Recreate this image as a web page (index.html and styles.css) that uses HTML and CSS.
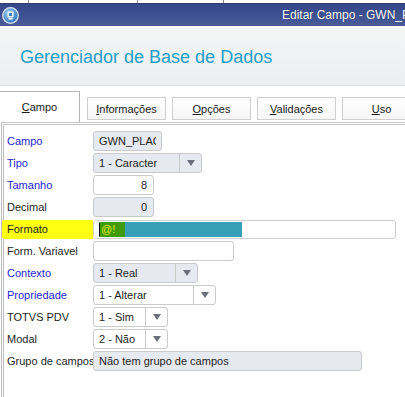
FILE: index.html
```html
<!DOCTYPE html>
<html lang="pt">
<head>
<meta charset="utf-8">
<title>Editar Campo</title>
<link rel="stylesheet" href="styles.css">
</head>
<body>
<div class="window">
  <div class="strip">
    <div class="strip-cell c1"></div>
    <div class="strip-cell c2"></div>
    <div class="strip-cell c3"></div>
  </div>
  <div class="titlebar">
    <svg class="app-icon" width="17" height="17" viewBox="0 0 17 17">
      <defs>
        <radialGradient id="ig" cx="0.4" cy="0.35" r="0.7">
          <stop offset="0" stop-color="#9fd2f2"/>
          <stop offset="1" stop-color="#2a6fb8"/>
        </radialGradient>
      </defs>
      <circle cx="8.5" cy="8.5" r="7.8" fill="url(#ig)" stroke="#d8e4f0" stroke-width="1.3"/>
      <rect x="5.5" y="4.5" width="6" height="6" rx="0.8" fill="#e8f3fb"/>
      <rect x="7" y="6" width="3" height="3" fill="#3d7fc0"/>
      <rect x="6.5" y="11" width="4" height="1.6" fill="#e8f3fb"/>
    </svg>
    <span class="title-text">Editar Campo - GWN_PLACA</span>
  </div>
  <div class="header">
    <h1 class="app-title">Gerenciador de Base de Dados</h1>
  </div>
  <div class="tabs">
    <div class="tab active"><span><u>C</u>ampo</span></div>
    <div class="tab"><span><u>I</u>nformações</span></div>
    <div class="tab"><span><u>O</u>pções</span></div>
    <div class="tab"><span><u>V</u>alidações</span></div>
    <div class="tab"><span><u>U</u>so</span></div>
  </div>
  <div class="panel">
    <div class="row">
      <label class="lbl blue">Campo</label>
      <div class="field ro w-campo"><span class="clip">GWN_PLACA</span></div>
    </div>
    <div class="row">
      <label class="lbl blue">Tipo</label>
      <div class="select ro w-tipo"><span class="val">1 - Caracter</span><span class="arr"><i class="tri"></i></span></div>
    </div>
    <div class="row">
      <label class="lbl blue">Tamanho</label>
      <div class="field num w-num">8</div>
    </div>
    <div class="row">
      <label class="lbl">Decimal</label>
      <div class="field ro num w-num">0</div>
    </div>
    <div class="row">
      <label class="lbl hl">Formato</label>
      <div class="field fmt w-fmt">
        <span class="fmt-fill"><span class="fmt-sel"><i class="caret"></i>@!</span></span>
      </div>
    </div>
    <div class="row">
      <label class="lbl">Form. Variavel</label>
      <div class="field w-var"></div>
    </div>
    <div class="row">
      <label class="lbl blue">Contexto</label>
      <div class="select ro w-ctx"><span class="val">1 - Real</span><span class="arr"><i class="tri"></i></span></div>
    </div>
    <div class="row">
      <label class="lbl blue">Propriedade</label>
      <div class="select w-prop"><span class="val">1 - Alterar</span><span class="arr"><i class="tri"></i></span></div>
    </div>
    <div class="row">
      <label class="lbl">TOTVS PDV</label>
      <div class="select w-sm"><span class="val">1 - Sim</span><span class="arr"><i class="tri"></i></span></div>
    </div>
    <div class="row">
      <label class="lbl">Modal</label>
      <div class="select w-sm"><span class="val">2 - Não</span><span class="arr"><i class="tri"></i></span></div>
    </div>
    <div class="row">
      <label class="lbl nowrap">Grupo de campos</label>
      <div class="field ro w-grp">Não tem grupo de campos</div>
    </div>
  </div>
</div>
</body>
</html>
```
FILE: styles.css
```css
* { box-sizing: border-box; }
html, body {
  margin: 0;
  padding: 0;
  width: 405px;
  height: 397px;
  overflow: hidden;
  background: #ffffff;
  font-family: "Liberation Sans", Arial, sans-serif;
  font-size: 11px;
  color: #1e1e1e;
}
.window {
  width: 405px;
  height: 397px;
  display: flex;
  flex-direction: column;
  overflow: hidden;
}
.strip {
  height: 3px;
  display: flex;
  background: #ffffff;
  flex: none;
}
.strip-cell { height: 3px; border-right: 1px solid #8a8a8a; }
.c1 { width: 29px; }
.c2 { width: 109px; }
.c3 { width: 86px; }

.titlebar {
  flex: none;
  height: 23px;
  display: flex;
  align-items: center;
  background: linear-gradient(#34488a, #4a5b98);
  border-top: 1px solid #2c3c70;
  overflow: hidden;
  white-space: nowrap;
}
.app-icon { flex: none; margin-left: 2px; margin-top: 1px; }
.title-text {
  flex: none;
  margin-left: 263px;
  color: #ffffff;
  font-size: 12px;
  text-shadow: 0 0 1px #1c2a5a;
}

.header {
  flex: none;
  height: 60px;
  background: linear-gradient(#f5f6f6, #eceef0);
  border-bottom: 1px solid #d9dadc;
  display: flex;
  align-items: center;
  padding: 3px 0 0 20px;
}
.app-title {
  margin: 0;
  font-weight: normal;
  font-size: 18px;
  color: #1f9fc9;
}

.tabs {
  flex: none;
  height: 36px;
  display: flex;
  align-items: flex-end;
  gap: 6px;
}
.tab {
  width: 79px;
  height: 23px;
  margin-bottom: 2px;
  border: 1px solid #cfcfcf;
  background: linear-gradient(#ffffff, #f6f6f6);
  display: flex;
  align-items: center;
  justify-content: center;
  padding-top: 1px;
  flex: none;
  color: #1a1a1a;
}
.tab.active {
  width: 81px;
  height: 31px;
  margin-left: -1px;
  margin-bottom: 0;
  border-color: #b4b4b4;
  border-bottom: none;
  background: #ffffff;
  align-items: flex-start;
  padding-top: 9px;
}
.tab.active + .tab { margin-left: 1px; }

.panel {
  flex: 1;
  margin-left: 1px;
  border-top: 3px double #c6c6c6;
  border-left: 3px double #bdbdbd;
  padding: 6px 0 0 3px;
  display: flex;
  flex-direction: column;
  gap: 2px;
}
.row {
  height: 20px;
  display: grid;
  grid-template-columns: 86px 1fr;
  align-items: center;
}
.lbl { display: flex; align-items: center; height: 20px; }
.lbl.blue { color: #2626d6; }
.lbl.nowrap { white-space: nowrap; }
.lbl.hl {
  margin-left: -5px;
  padding-left: 5px;
  height: 19px;
  background: #ffff14;
  border-radius: 2px 0 0 3px;
}

.field, .select {
  height: 20px;
  border: 1px solid #c9cacc;
  border-radius: 3px;
  background: #ffffff;
  display: flex;
  align-items: center;
  white-space: nowrap;
  overflow: hidden;
}
.field { padding: 0 5px; }
.ro { background: #e6e9ef; }
.num { justify-content: flex-end; padding-right: 6px; }
.clip { overflow: hidden; }

.select .val { flex: 1; padding-left: 5px; }
.select .arr {
  width: 22px;
  height: 100%;
  border-left: 1px solid #c9cacc;
  display: flex;
  align-items: center;
  justify-content: center;
  flex: none;
}
.tri {
  width: 0;
  height: 0;
  border-left: 4px solid transparent;
  border-right: 4px solid transparent;
  border-top: 6px solid #6c707a;
}

.w-campo { width: 69px; }
.w-tipo { width: 109px; }
.w-num { width: 61px; }
.w-fmt { width: 303px; }
.w-var { width: 141px; }
.w-ctx { width: 105px; }
.w-prop { width: 123px; }
.w-sm { width: 75px; }
.w-grp { width: 269px; }

.fmt { height: 19px; padding: 0 0 0 5px; border-color: #cfcfd1; }
.fmt-fill {
  width: 143px;
  height: 15px;
  background: #379fb7;
  display: flex;
}
.fmt-sel {
  width: 26px;
  height: 15px;
  background: #3e9c0c;
  color: #e4e418;
  display: flex;
  align-items: center;
  font-size: 11px;
}
.caret {
  width: 1px;
  height: 13px;
  background: #000000;
  margin-right: 1px;
}
```
